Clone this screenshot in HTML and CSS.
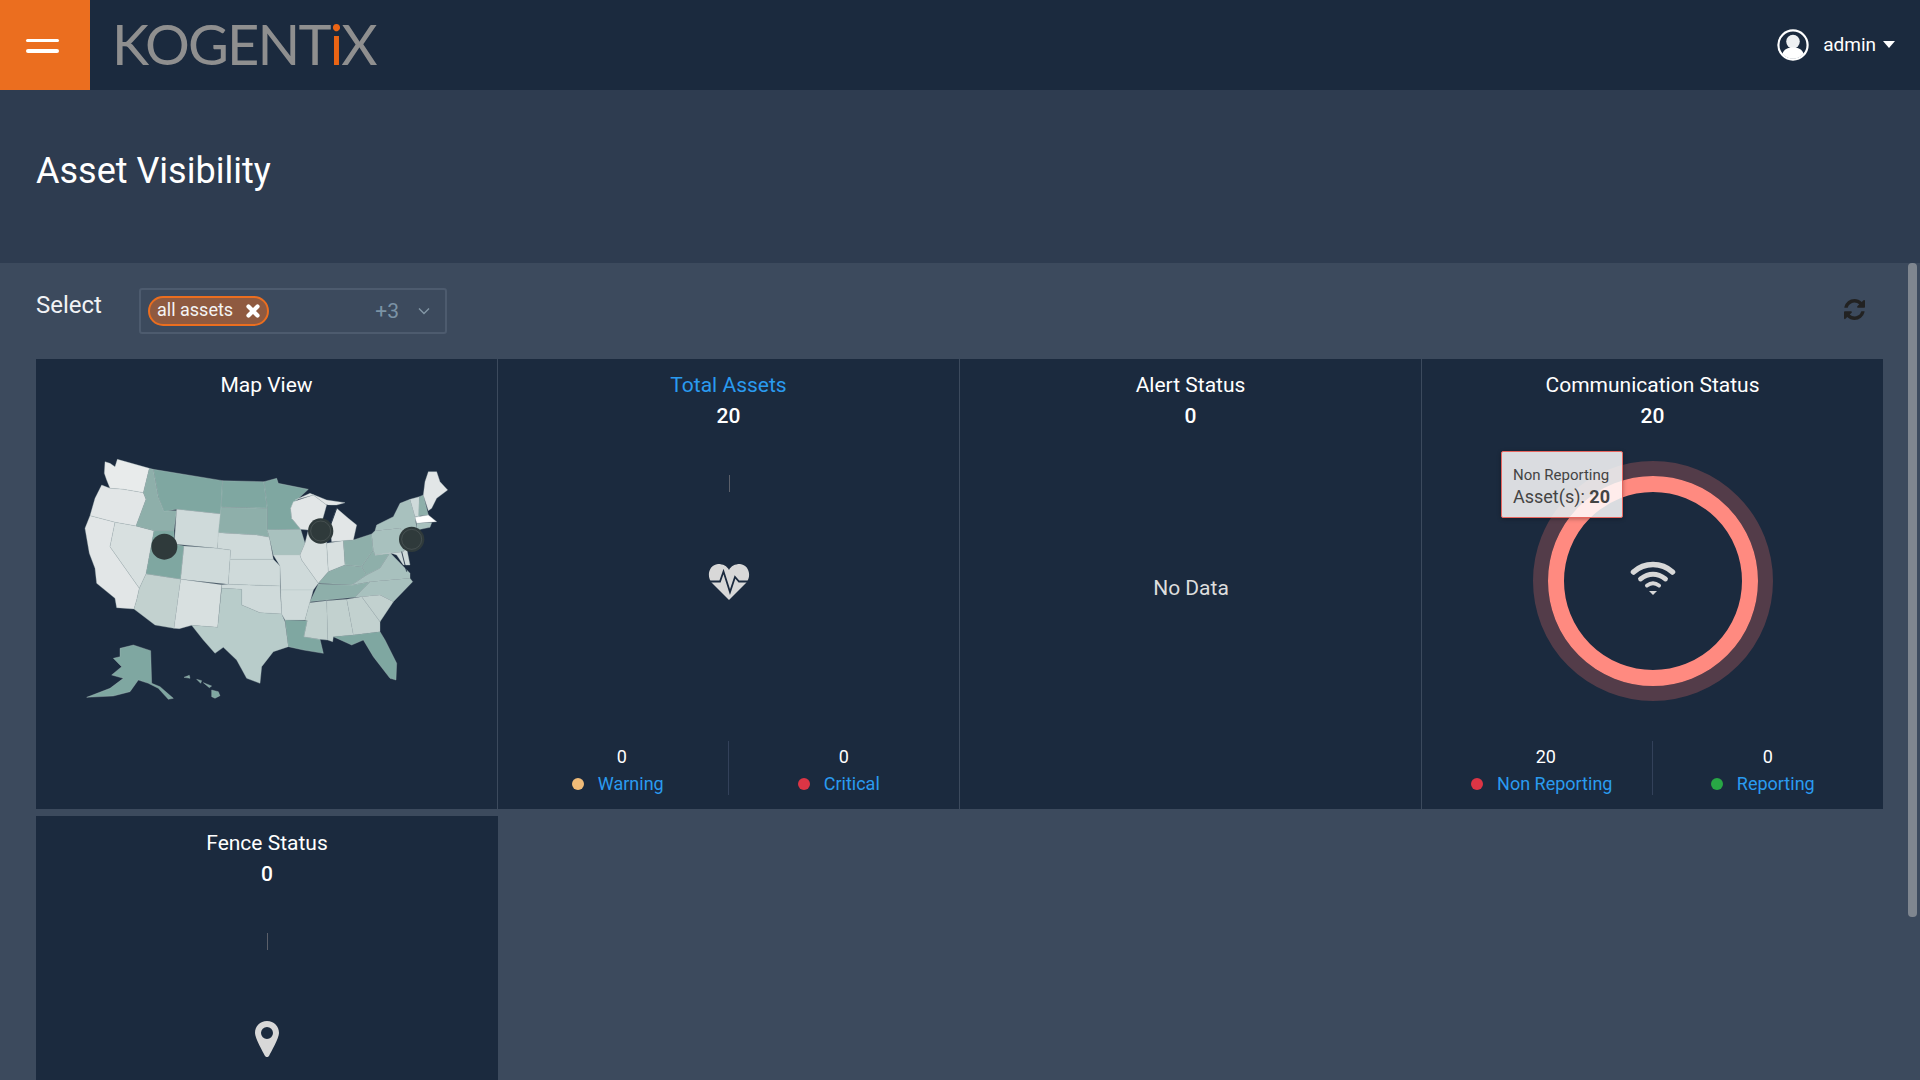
FILE: index.html
```html
<!DOCTYPE html>
<html lang="en">
<head>
  <meta charset="UTF-8" />
  <title>Asset Visibility</title>
  <link rel="stylesheet" href="styles.css">
</head>
<body>
  <header class="topbar">
    <button class="menu-btn"><span></span><span></span></button>
    <div class="logo">KOGENT<span class="logo-i">i</span>X</div>
    <div class="user">
      <svg class="user-icon" viewBox="0 0 32 32">
        <circle cx="16" cy="16" r="14.6" fill="#1b2a3e" stroke="#fff" stroke-width="2.2"/>
        <circle cx="16" cy="12.6" r="6.8" fill="#eef0f2"/>
        <path d="M5.500 25c1-5 5.500-6.500 10.500-6.500s9.500 1.500 10.500 6.500a14 14 0 0 1-21 0z" fill="#fff"/>
      </svg>
      <span class="user-name">admin</span>
      <span class="caret"></span>
    </div>
  </header>

  <section class="title-band">
    <h1>Asset Visibility</h1>
  </section>

  <main class="content">
    <div class="thumb"></div>
    <div class="filter-row">
      <label class="filter-label">Select</label>
      <div class="select-box">
        <span class="chip">all assets
          <svg class="chip-x" viewBox="0 0 14 14"><path d="M2.500 2.500l9 9M11.500 2.500l-9 9" stroke="#fff" stroke-width="4.200" stroke-linecap="round"/></svg>
        </span>
        <span class="more">+3</span>
        <svg class="chevron" viewBox="0 0 12 8"><path d="M1 1.500l5 5 5-5" fill="none" stroke="#8397a6" stroke-width="1.400"/></svg>
      </div>
      <svg class="refresh" viewBox="0 0 1536 1536"><path d="M1511 928q0 5-1 7-64 268-268 434.500t-478 166.500q-146 0-282.500-55t-243.500-157l-129 129q-19 19-45 19t-45-19-19-45v-448q0-26 19-45t45-19h448q26 0 45 19t19 45-19 45l-137 137q71 66 161 102t187 36q134 0 250-65t186-179q11-17 53-117 8-23 30-23h192q13 0 22.500 9.500t9.500 22.500zm25-800v448q0 26-19 45t-45 19h-448q-26 0-45-19t-19-45 19-45l138-138q-148-137-349-137-134 0-250 65t-186 179q-11 17-53 117-8 23-30 23h-199q-13 0-22.500-9.500t-9.500-22.500v-7q65-268 270-434.500t480-166.500q146 0 284 55.500t245 156.500l130-129q19-19 45-19t45 19 19 45z"/></svg>
    </div>

    <div class="cards">
      <!-- map -->
      <div class="card">
        <div class="card-title">Map View</div>
        <svg class="map" viewBox="0 0 1260 840">
          <g class="states">
            <path class="s9" d="M135 65L133 100 140 120 150 145 190 148 250 158 268 85 172 58 165 80 150 70z"/>
            <path class="s8" d="M150 145L125 135 105 175 90 227 165 247 228 258 258 178 250 158 190 148z"/>
            <path class="s8" d="M90 227L165 247 150 320 238 445 230 480 222 507 170 503 165 475 110 430 105 385 88 340 75 265z"/>
            <path class="s6" d="M165 247L228 258 282 272 258 402 238 445 150 320z"/>
            <path class="s2" d="M268 85L280 88 295 170 312 212 350 212 342 272 282 272 228 258 258 178 250 158z"/>
            <path class="s1" d="M280 88L488 122 483 222 350 208 312 215 295 170z"/>
            <path class="s5" d="M350 208L483 222 472 325 343 312z"/>
            <path class="s1" d="M282 272L342 272 343 312 372 318 362 418 258 402z"/>
            <path class="s5" d="M372 318L472 325 512 330 505 433 362 418z"/>
            <path class="s4" d="M258 402L362 418 342 565 285 555 222 507 230 480 238 445z"/>
            <path class="s6" d="M362 418L485 434 473 562 395 556 358 566 342 565z"/>
            <path class="s1" d="M488 122L612 125 622 205 483 202z"/>
            <path class="s2" d="M483 202L622 205 622 270 628 292 590 285 475 278z"/>
            <path class="s5" d="M475 278L590 285 628 292 640 358 510 358 512 330 472 325z"/>
            <path class="s5" d="M510 358L640 358 660 378 660 438 505 433z"/>
            <path class="s5" d="M485 434L505 433 660 438 665 522 600 518 545 495 545 448 485 445z"/>
            <path class="s3x" d="M485 445L545 448 545 495 600 518 665 522 675 545 685 620 640 635 605 680 600 730 560 715 530 660 490 622 465 640 430 600 395 556 473 562z"/>
            <path class="s1" d="M612 125L650 115 655 130 745 148 700 190 692 205 695 235 722 268 622 270 622 205z"/>
            <path class="s3" d="M622 270L722 268 735 310 720 345 640 345 628 292z"/>
            <path class="s5" d="M640 345L720 345 725 360 775 430 760 450 662 450 660 378z"/>
            <path class="s5" d="M662 450L760 450 735 540 675 540 665 522z"/>
            <path class="s1" d="M675 540L742 542 732 590 780 598 790 640 730 630 685 620z"/>
            <path class="s8" d="M692 205L700 185 760 165 800 195 790 230 780 262 745 270 722 268 695 235z"/>
            <path class="s8" d="M705 180L750 160 800 180 855 188 830 195 800 195 760 165z"/>
            <path class="s8" d="M830 205L865 235 890 255 880 300 815 305 810 260z"/>
            <path class="s6" d="M745 270L800 268 800 310 805 395 775 430 725 360 720 345 735 310z"/>
            <path class="s6" d="M800 310L850 302 855 375 805 395z"/>
            <path class="s2" d="M850 302L880 300 935 282 940 330 905 380 855 375z"/>
            <path class="s2" d="M775 430L805 395 855 375 905 380 920 405 875 435z"/>
            <path class="s2" d="M750 485L775 432 875 435 930 425 885 472z"/>
            <path class="s2" d="M905 380L940 330 945 345 990 338 960 385 920 405z"/>
            <path class="s3" d="M875 435L920 405 960 385 990 338 1050 400 1050 415 930 425z"/>
            <path class="s3" d="M885 472L930 425 1050 415 1058 425 1000 485 960 465 905 470z"/>
            <path class="s4" d="M905 470L960 465 1000 485 960 545z"/>
            <path class="s4" d="M860 478L905 470 960 545 960 575 880 585z"/>
            <path class="s4" d="M800 482L860 478 880 585 820 590 818 605 803 600z"/>
            <path class="s4" d="M749 488L800 482 803 600 780 598 732 590 742 542 735 540z"/>
            <path class="s1" d="M820 590L880 585 960 575 975 600 1010 670 1008 720 990 715 940 650 910 600 875 615z"/>
            <path class="s3" d="M940 330L935 282 945 272 1020 265 1040 300 1030 335 945 345z"/>
            <path class="s3" d="M945 272L950 255 1000 230 1020 190 1050 178 1065 230 1070 268 1090 262 1040 285 1020 265z"/>
            <path class="s5" d="M1020 265L1040 285 1045 300 1040 325 1030 335 1040 300z"/>
            <path class="s5" d="M945 345L1030 335 1040 325 1050 375 1030 375 1010 345 990 338z"/>
            <path class="s5" d="M1050 178L1078 170 1078 230 1065 230z"/>
            <path class="s2" d="M1078 170L1090 165 1105 225 1075 228z"/>
            <path class="s8" d="M1090 165L1095 125 1105 95 1130 95 1140 125 1163 150 1130 175 1115 205 1105 212z"/>
            <path class="s10" d="M1065 232L1105 225 1130 245 1070 250z"/>
            <path class="s3" d="M1070 250L1115 248 1110 262 1070 270z"/>
            <path class="s1" d="M180 625L220 615 272 632 275 730 300 740 340 775 325 778 295 745 265 730 235 720 210 755 160 768 80 772 150 745 190 715 155 705 185 680 160 655 180 650z"/>
            <path class="s1" d="M455 750L475 755 480 767 465 775 455 770zM410 718L425 722 422 730zM430 728L455 738 448 743zM372 712L388 706 390 715z"/>
          </g>
          <path class="bay" d="M1025 335L1040 395M800 195L830 205 810 260"/>
          <circle class="dot-core" cx="313" cy="320" r="39"/>
          <circle class="dot-core" cx="782" cy="273" r="38"/>
          <circle class="dot-ring" cx="782" cy="273" r="30"/>
          <circle class="dot-core" cx="1055" cy="298" r="38"/>
          <circle class="dot-ring" cx="1055" cy="298" r="30"/>
        </svg>
      </div>

      <!-- total assets -->
      <div class="card">
        <div class="card-title link">Total Assets</div>
        <div class="card-count">20</div>
        <div class="chart">
          <span class="tick"></span>
          <svg class="heart" viewBox="0 0 42 37">
            <path d="M21 36L4 19C-2 12 1 1 10 0c5 0 9 2 11 6 2-4 6-6 11-6 9 1 12 12 6 19z" fill="#d8d8d8"/>
            <path d="M2 17.500h10L15.500 7.500 22 28l5-15 4 4.500h9" fill="none" stroke="#1b2a3e" stroke-width="1.800"/>
          </svg>
        </div>
        <div class="stats">
          <div class="stat first">
            <div class="stat-num">0</div>
            <div class="stat-label"><i class="dot warn"></i>Warning</div>
          </div>
          <div class="stat">
            <div class="stat-num">0</div>
            <div class="stat-label"><i class="dot crit"></i>Critical</div>
          </div>
        </div>
      </div>

      <!-- alerts -->
      <div class="card">
        <div class="card-title">Alert Status</div>
        <div class="card-count">0</div>
        <div class="no-data">No Data</div>
      </div>

      <!-- communication -->
      <div class="card">
        <div class="card-title">Communication Status</div>
        <div class="card-count">20</div>
        <div class="chart">
          <svg class="ring" viewBox="0 0 240 240">
            <circle cx="120" cy="120" r="112.500" fill="none" stroke="#533c49" stroke-width="15"/>
            <circle cx="120" cy="120" r="97" fill="none" stroke="#ff8a80" stroke-width="16"/>
            <g transform="translate(97.500 101)" fill="none" stroke="#d8d8d8" stroke-linecap="round">
              <path d="M3 10C14 0 31 0 42 10" stroke-width="5.500"/>
              <path d="M10 17c8-6 17-6 25 0" stroke-width="4.800"/>
              <path d="M16.500 23.500c4-3 8-3 12 0" stroke-width="4"/>
              <path d="M18.500 29h8l-4 4z" fill="#d8d8d8" stroke="none"/>
            </g>
          </svg>
          <div class="tooltip">
            <div class="tip-name">Non Reporting</div>
            <div class="tip-value">Asset(s): <b>20</b></div>
          </div>
        </div>
        <div class="stats">
          <div class="stat first">
            <div class="stat-num">20</div>
            <div class="stat-label"><i class="dot crit"></i>Non Reporting</div>
          </div>
          <div class="stat">
            <div class="stat-num">0</div>
            <div class="stat-label"><i class="dot ok"></i>Reporting</div>
          </div>
        </div>
      </div>

      <!-- fence -->
      <div class="card fence">
        <div class="card-title">Fence Status</div>
        <div class="card-count">0</div>
        <div class="chart">
          <span class="tick"></span>
          <svg class="pin" viewBox="0 0 24 36">
            <path fill-rule="evenodd" d="M12 0C5 0 0 5 0 12c0 5 8 19 10 23 1 1.500 3 1.500 4 0 2-4 10-18 10-23C24 5 19 0 12 0zm0 6a6 6 0 1 1 0 12 6 6 0 0 1 0-12z" fill="#d8d8d8"/>
          </svg>
        </div>
      </div>
    </div>
  </main>
</body>
</html>
```

FILE: styles.css
```css
* {
  box-sizing: border-box;
}
html, body {
  height: 100%;
}
body {
  margin: 0;
  font-family: Roboto, "Liberation Sans", sans-serif;
  background: #3c4a5d;
  color: #fff;
  overflow: hidden;
  display: flex;
  flex-direction: column;
}

/* top bar */
.topbar {
  height: 90px;
  flex: none;
  background: #1b2a3e;
  display: flex;
  align-items: center;
}
.menu-btn {
  width: 90px;
  height: 90px;
  background: #eb6e1f;
  border: none;
  padding: 1px 0 0 26px;
  display: flex;
  flex-direction: column;
  justify-content: center;
  gap: 7px;
}
.menu-btn span {
  display: block;
  width: 33px;
  height: 3.500px;
  background: #fff;
  border-radius: 2px;
}
.logo {
  margin-left: 22px;
  font-family: Lato, sans-serif;
  font-weight: 400;
  font-size: 56px;
  letter-spacing: -1.800px;
  color: #8f8f8f;
  line-height: 88px;
  height: 90px;
}
.logo-i {
  color: #eb6414;
}
.user {
  margin-left: auto;
  padding-right: 25px;
  display: flex;
  align-items: center;
}
.user-icon {
  width: 32px;
  height: 32px;
}
.user-name {
  margin-left: 14px;
  font-size: 19px;
  margin-top: -1px;
}
.caret {
  margin-left: 7px;
  border-top: 7px solid #fff;
  border-left: 6.500px solid transparent;
  border-right: 6.500px solid transparent;
  margin-top: -1px;
}

/* title */
.title-band {
  height: 173px;
  flex: none;
  background: #2e3c50;
  padding: 56px 36px 0;
}
h1 {
  margin: 0;
  font-size: 36px;
  font-weight: 400;
  line-height: 50px;
}

/* content */
.content {
  flex: 1;
  min-height: 0;
  overflow: hidden;
  position: relative;
  padding: 25px 37px 0 36px;
}
.thumb {
  position: absolute;
  right: 3px;
  top: 0;
  width: 9px;
  height: 654px;
  background: #7f868f;
  border-radius: 4px;
}
.filter-row {
  display: flex;
  height: 46px;
  align-items: flex-start;
}
.filter-label {
  width: 103px;
  font-size: 24px;
  line-height: 34px;
  color: #f1f3f5;
}
.select-box {
  width: 308px;
  height: 46px;
  border: 2px solid #4d5b6e;
  border-radius: 3px;
  display: flex;
  align-items: center;
  padding: 0 15px 0 7px;
}
.chip {
  height: 30px;
  width: 121px;
  border: 2px solid #eb6e1f;
  border-radius: 15px;
  background: #8f5a40;
  font-size: 18px;
  line-height: 22px;
  padding-bottom: 2px;
  display: flex;
  align-items: center;
  padding-left: 7px;
  color: #f4f4f4;
}
.chip-x {
  width: 14px;
  height: 14px;
  margin: 2px 7px 0 auto;
}
.more {
  margin-left: auto;
  font-size: 21px;
  color: #7b93a5;
}
.chevron {
  width: 12px;
  height: 8px;
  margin-left: 19px;
}
.refresh {
  width: 21px;
  height: 21px;
  margin: 11px 18px 0 auto;
  fill: #222;
}

/* cards */
.cards {
  display: grid;
  grid-template-columns: 461px 461px 461px 461px;
  column-gap: 1px;
  row-gap: 7px;
  margin-top: 25px;
}
.card {
  background: #1b2a3e;
  height: 450px;
  padding-top: 14px;
  display: flex;
  flex-direction: column;
  align-items: center;
  position: relative;
}
.card.fence {
  width: 462px;
  padding-top: 15px;
}
.card-title {
  font-size: 21px;
  line-height: 24px;
}
.card-title.link {
  color: #2a9bf0;
}
.card-count {
  font-size: 21px;
  font-weight: 500;
  line-height: 24px;
  margin-top: 7px;
}
.map {
  width: 420px;
  height: 280px;
  margin: 43px 0 0 7px;
}
.states path {
  stroke: #b4c2c2;
  stroke-width: 1;
}
.s1 { fill: #7fa7a1; }
.s2 { fill: #8eafaa; }
.s3 { fill: #a8c1be; }
.s3x { fill: #b8ccca; }
.s4 { fill: #c2d1cf; }
.s5 { fill: #cfdada; }
.s6 { fill: #d8e0e0; }
.s8 { fill: #e2e6e7; }
.s9 { fill: #e8ebeb; }
.s10 { fill: #ffffff; }
.bay {
  fill: none;
  stroke: #1b2a3e;
  stroke-width: 2.500;
}
.dot-core {
  fill: #2f3a3b;
}
.dot-ring {
  fill: none;
  stroke: rgba(255, 255, 255, 0.1);
  stroke-width: 3;
}

.chart {
  width: 100%;
  height: 240px;
  margin-top: 33px;
  display: flex;
  justify-content: center;
  align-items: center;
  position: relative;
}
.tick {
  position: absolute;
  left: 50%;
  top: 14px;
  width: 1px;
  height: 17px;
  background: #5b5f69;
}
.heart {
  width: 42px;
  height: 37px;
  margin-top: 2px;
}
.ring {
  width: 240px;
  height: 240px;
}
.pin {
  position: absolute;
  left: 219px;
  top: 102px;
  width: 24px;
  height: 36px;
}
.tooltip {
  position: absolute;
  left: 79px;
  top: -10px;
  width: 122px;
  height: 67px;
  padding: 13px 0 0 11px;
  background: rgba(255, 255, 255, 0.84);
  border: 1px solid #e8665f;
  border-radius: 2px;
  color: #444;
  box-shadow: 0 1px 4px rgba(0, 0, 0, 0.3);
}
.tip-name {
  font-size: 15px;
  line-height: 20px;
}
.tip-value {
  font-size: 18px;
  line-height: 24px;
}
.no-data {
  margin: 148px 0 0 1px;
  font-size: 21px;
  color: #ddd;
}

.stats {
  display: flex;
  width: 100%;
  margin-top: 40px;
}
.stat {
  flex: 0 0 50%;
  text-align: center;
  height: 54px;
  padding-top: 4px;
}
.stat.first {
  padding-left: 18px;
  border-right: 1px solid #33415a;
}
.stat-num {
  font-size: 18px;
  line-height: 24px;
}
.stat-label {
  font-size: 18px;
  line-height: 24px;
  margin-top: 3px;
  color: #2a9bf0;
  padding-right: 10px;
}
.first .stat-label {
  padding-right: 8px;
}
.dot {
  display: inline-block;
  width: 12px;
  height: 12px;
  border-radius: 50%;
  margin-right: 14px;
}
.dot.warn { background: #f0bb78; }
.dot.crit { background: #dc3545; }
.dot.ok { background: #28a745; }
```
